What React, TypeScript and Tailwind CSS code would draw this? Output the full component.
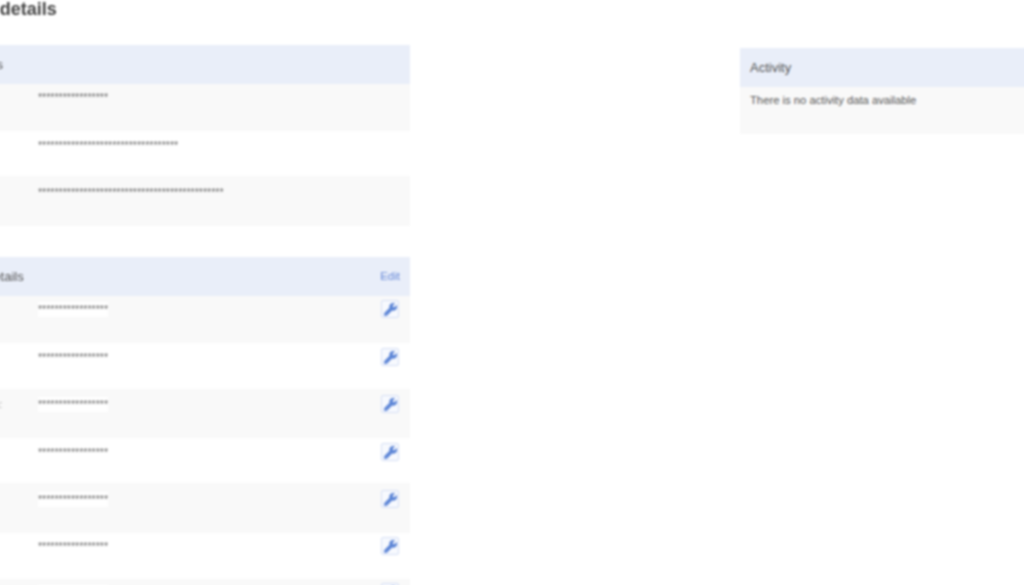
import React from "react";
import { FaWrench } from "react-icons/fa";

interface Row {
  label: string;
  stars: number;
  height: string;
  pad: string;
  shaded: boolean;
}

const detailRows: Row[] = [
  { label: "Full name", stars: 17, height: "h-[47px]", pad: "pt-[5px]", shaded: true },
  { label: "Email address", stars: 34, height: "h-[45px]", pad: "pt-[6px]", shaded: false },
  { label: "Postal address", stars: 45, height: "h-[50px]", pad: "pt-[8px]", shaded: true },
];

const accountRows: Row[] = [
  { label: "Username", stars: 17, height: "h-[47px]", pad: "pt-[5px]", shaded: true },
  { label: "Password", stars: 17, height: "h-[46px]", pad: "pt-[6px]", shaded: false },
  { label: "Memorable information:", stars: 17, height: "h-[49px]", pad: "pt-[7px]", shaded: true },
  { label: "Sort code", stars: 17, height: "h-[45px]", pad: "pt-[6px]", shaded: false },
  { label: "Reference", stars: 17, height: "h-[50px]", pad: "pt-[8px]", shaded: true },
  { label: "Telephone", stars: 17, height: "h-[46px]", pad: "pt-[5px]", shaded: false },
  { label: "Account number", stars: 17, height: "h-[47px]", pad: "pt-[5px]", shaded: true },
];

const SectionHeader: React.FC<{ title: string; edit?: boolean }> = ({ title, edit }) => (
  <div className="flex h-[39px] items-center justify-between bg-[#e9eef9] px-[10px] text-[13px] text-[#555]">
    <span>{title}</span>
    {edit && <span className="text-[11.5px] text-[#6688d8]">Edit</span>}
  </div>
);

const ValueRow: React.FC<{ row: Row; editable?: boolean }> = ({ row, editable }) => (
  <div className={`flex ${row.height} ${row.pad} ${row.shaded ? "bg-[#f9f9f9]" : "bg-white"}`}>
    <div className="w-[140px] shrink-0 whitespace-nowrap pl-[10px] text-[10.7px] text-[#999]">
      {row.label}
    </div>
    <div className="flex-1 pl-[18px] pt-px">
      <span className={`block w-fit text-[10.6px] leading-[15px] text-[#666] ${editable ? "bg-white" : ""}`}>
        {"*".repeat(row.stars)}
      </span>
    </div>
    {editable && (
      <div className="-mt-px pr-[11px]">
        <div className="flex size-[18px] items-center justify-center rounded-[2px] border border-[#d5dff5] bg-[#f7f9fe]">
          <FaWrench stroke="currentColor" strokeWidth={30} className="size-[13px] text-[#5b84d6]" />
        </div>
      </div>
    )}
  </div>
);

export default function App() {
  return (
    <div className="h-[585px] w-[1024px] overflow-hidden bg-white font-['Liberation_Sans',Arial,sans-serif]">
      <div className="-ml-[120px] flex blur-[0.8px]">
        <div className="w-[530px] shrink-0">
          <h1 className="h-[45px] pl-[1px] text-[18px] font-bold leading-[18px] text-[#444]">
            Your account details
          </h1>
          <SectionHeader title="Your contact details" />
          {detailRows.map((row) => (
            <ValueRow key={row.label} row={row} />
          ))}
          <div className="mt-[31px]">
            <SectionHeader title="Current account details" edit />
            {accountRows.map((row) => (
              <ValueRow key={row.label} row={row} editable />
            ))}
          </div>
        </div>
        <div className="ml-[330px] mt-[48px] w-[400px] shrink-0">
          <SectionHeader title="Activity" />
          <div className="h-[47px] bg-[#f9f9f9] px-[10px] pt-[5px] text-[11.25px] text-[#555]">
            There is no activity data available
          </div>
        </div>
      </div>
    </div>
  );
}
